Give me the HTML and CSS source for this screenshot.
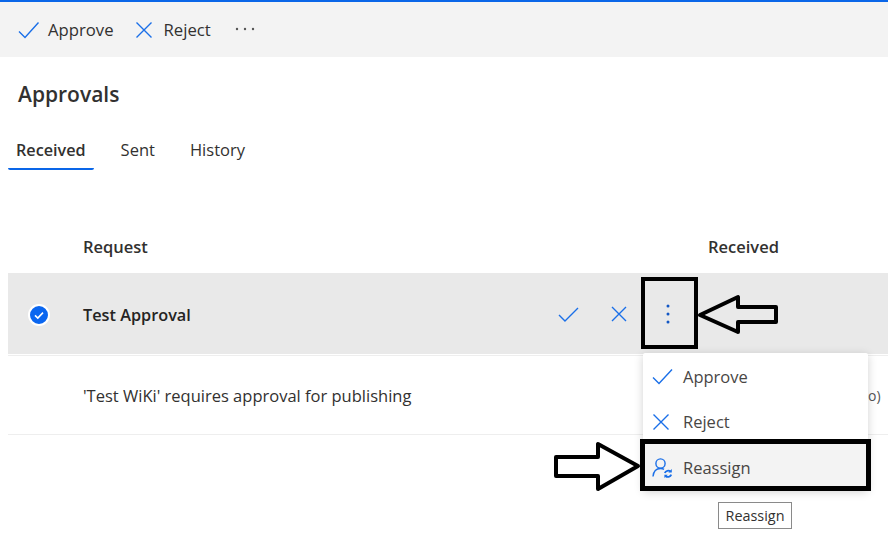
FILE: index.html
```html
<!DOCTYPE html>
<html lang="en">
<head>
<meta charset="utf-8">
<title>Approvals</title>
<link rel="stylesheet" href="styles.css">
</head>
<body>
<div class="page">
  <header class="toolbar">
    <button class="tool tool-approve">
      <svg class="ic" width="22" height="18" viewBox="0 0 22 18"><path d="M1 10.5 L7 16.5 L20.5 1.5"/></svg>
      <span>Approve</span>
    </button>
    <button class="tool tool-reject">
      <svg class="ic" width="18" height="18" viewBox="0 0 18 18"><path d="M1.5 1.5 L16.5 16.5 M16.5 1.5 L1.5 16.5"/></svg>
      <span>Reject</span>
    </button>
    <span class="more">
      <svg width="20" height="4" viewBox="0 0 20 4"><circle cx="2" cy="2" r="1.2"/><circle cx="10" cy="2" r="1.2"/><circle cx="18" cy="2" r="1.2"/></svg>
    </span>
  </header>

  <h1 class="title">Approvals</h1>

  <nav class="tabs">
    <a class="tab active">Received</a>
    <a class="tab">Sent</a>
    <a class="tab">History</a>
  </nav>

  <section class="list">
    <div class="list-head">
      <span class="col-request">Request</span>
      <span class="col-received">Received</span>
    </div>
    <div class="row selected">
      <span class="check">
        <svg width="22" height="22" viewBox="0 0 22 22"><circle cx="11" cy="11" r="10" class="check-bg"/><path d="M7 11.3 L9.8 14 L15 8.6" class="check-mark"/></svg>
      </span>
      <span class="row-title">Test Approval</span>
      <span class="row-actions">
        <svg class="ic" width="21" height="15" viewBox="0 0 21 15"><path d="M1 8 L7 14 L20 1"/></svg>
        <svg class="ic" width="16" height="16" viewBox="0 0 16 16"><path d="M1 1 L15 15 M15 1 L1 15"/></svg>
        <svg class="kebab" width="4" height="20" viewBox="0 0 4 20"><circle cx="2" cy="2" r="1.5"/><circle cx="2" cy="10" r="1.5"/><circle cx="2" cy="18" r="1.5"/></svg>
      </span>
    </div>
    <div class="row detail">
      <span class="row-text">'Test WiKi' requires approval for publishing</span>
      <span class="row-tail">o)</span>
    </div>
  </section>

  <div class="menu">
    <div class="menu-item">
      <span class="menu-ic"><svg class="ic" width="21" height="17" viewBox="0 0 21 17"><path d="M1 9.5 L7 15.5 L20 1.5"/></svg></span>
      <span>Approve</span>
    </div>
    <div class="menu-item">
      <span class="menu-ic"><svg class="ic" width="18" height="18" viewBox="0 0 18 18"><path d="M1.5 1.5 L16.5 16.5 M16.5 1.5 L1.5 16.5"/></svg></span>
      <span>Reject</span>
    </div>
    <div class="menu-item current">
      <span class="menu-ic"><svg class="ic" width="21" height="20" viewBox="0 0 21 20">
        <circle cx="8.5" cy="5.5" r="4.6"/>
        <path d="M1 18.5 C1.5 13.5 4 10.5 8.5 10.5 C10 10.5 11.2 10.8 12 11.4"/>
        <path class="thick" d="M12.8 15 A3.6 3.6 0 0 1 18.6 13.6 M19.3 16.6 A3.6 3.6 0 0 1 13.5 18"/>
        <path class="solid" d="M19.8 11 V14.5 H16.3 Z M12.4 20 V16.8 H15.8 Z"/>
      </svg></span>
      <span>Reassign</span>
    </div>
  </div>

  <div class="tip">Reassign</div>

  <div class="mark mark-kebab"></div>
  <div class="mark mark-item"></div>

  <svg class="arrow arrow-left" width="84" height="56" viewBox="0 0 84 56">
    <path d="M4 30 L42 12 V22 H80 V37 H42 V47 Z"/>
  </svg>
  <svg class="arrow arrow-right" width="88" height="54" viewBox="0 0 88 54">
    <path d="M85 27 L45 5 V18 H3 V37 H45 V50 Z"/>
  </svg>
</div>
</body>
</html>
```

FILE: styles.css
```css
* { box-sizing: border-box; }
html, body { margin: 0; padding: 0; background: #fff; }
body { width: 888px; height: 539px; overflow: hidden; font-family: "Open Sans", "Noto Sans", sans-serif; color: #323130; }
.page { position: relative; width: 888px; height: 539px; overflow: hidden; }

.ic { fill: none; stroke: #1a6fe8; stroke-width: 1.4; flex: none; }
.ic .solid { fill: #1a6fe8; stroke: none; }
.ic .thick { stroke-width: 1.8; }

.toolbar { height: 57px; border-top: 2px solid #0a66e8; background: #f3f3f3; display: flex; align-items: center; padding-left: 18px; }
.tool { display: flex; align-items: center; border: 0; background: none; padding: 0; font: inherit; font-size: 16.7px; color: #323130; }
.tool-approve { gap: 8px; }
.tool-reject { gap: 11px; margin-left: 21px; }
.more { display: flex; margin-left: 24px; margin-top: -1px; }
.more svg { fill: #555; }

.title { margin: 22px 0 0 18px; font-size: 21px; line-height: 30px; font-weight: 600; color: #323130; }

.tabs { display: flex; margin: 25px 0 0 8px; }
.tab { height: 36px; line-height: 32px; font-size: 16.5px; padding: 0 8px; margin-right: 19px; border-bottom: 2px solid transparent; }
.tab.active { font-size: 16.2px; font-weight: 600; border-bottom-color: #0a66e8; border-radius: 0 0 2px 2px; }

.list { margin: 57px 0 0 8px; }
.list-head { height: 46px; display: flex; align-items: center; font-size: 16.5px; font-weight: 600; padding-left: 75px; padding-bottom: 7px; }
.col-request { width: 625px; }
.row { display: flex; align-items: center; }
.selected { height: 81px; background: #e9e9e9; padding: 3px 0 0 20px; }
.check { display: flex; width: 55px; }
.check-bg { fill: #0a66f0; stroke: #fff; stroke-width: 2; }
.check-mark { fill: none; stroke: #fff; stroke-width: 1.6; }
.row-title { font-weight: 600; font-size: 16.3px; color: #252423; width: 475px; }
.row-actions { display: flex; align-items: center; gap: 32px; margin-top: -2px; }
.kebab { fill: #1257c4; margin-left: 7px; }
.detail { height: 80px; margin-top: 1px; border-top: 1px solid #eee; border-bottom: 1px solid #eee; padding: 0 0 0 75px; font-size: 16.5px; }
.row-text { width: 785px; }
.row-tail { font-size: 14px; color: #555; }

.menu { position: absolute; left: 643px; top: 353px; width: 225px; height: 137px; background: #fff; border-radius: 2px; box-shadow: 0 2px 10px rgba(0,0,0,.18); display: flex; flex-direction: column; }
.menu-item { height: 45px; display: flex; align-items: center; gap: 10px; padding: 2px 0 0 9px; font-size: 16.5px; color: #484644; }
.menu-item.current { background: #f3f3f3; height: 47px; }
.menu-ic { display: flex; width: 21px; flex: none; }

.tip { position: absolute; left: 718px; top: 502px; width: 74px; height: 27px; border: 1px solid #8a8a8a; background: #fff; font-size: 14.4px; line-height: 26px; text-align: center; color: #323130; }

.mark { position: absolute; border: 4px solid #000; }
.mark-kebab { left: 641px; top: 277px; width: 57px; height: 72px; }
.mark-item { left: 640px; top: 439px; width: 231px; height: 52px; border-width: 5px; }

.arrow { position: absolute; fill: none; stroke: #000; stroke-width: 4; stroke-linejoin: round; }
.arrow-left { left: 696px; top: 285px; }
.arrow-right { left: 553px; top: 439px; }
```
